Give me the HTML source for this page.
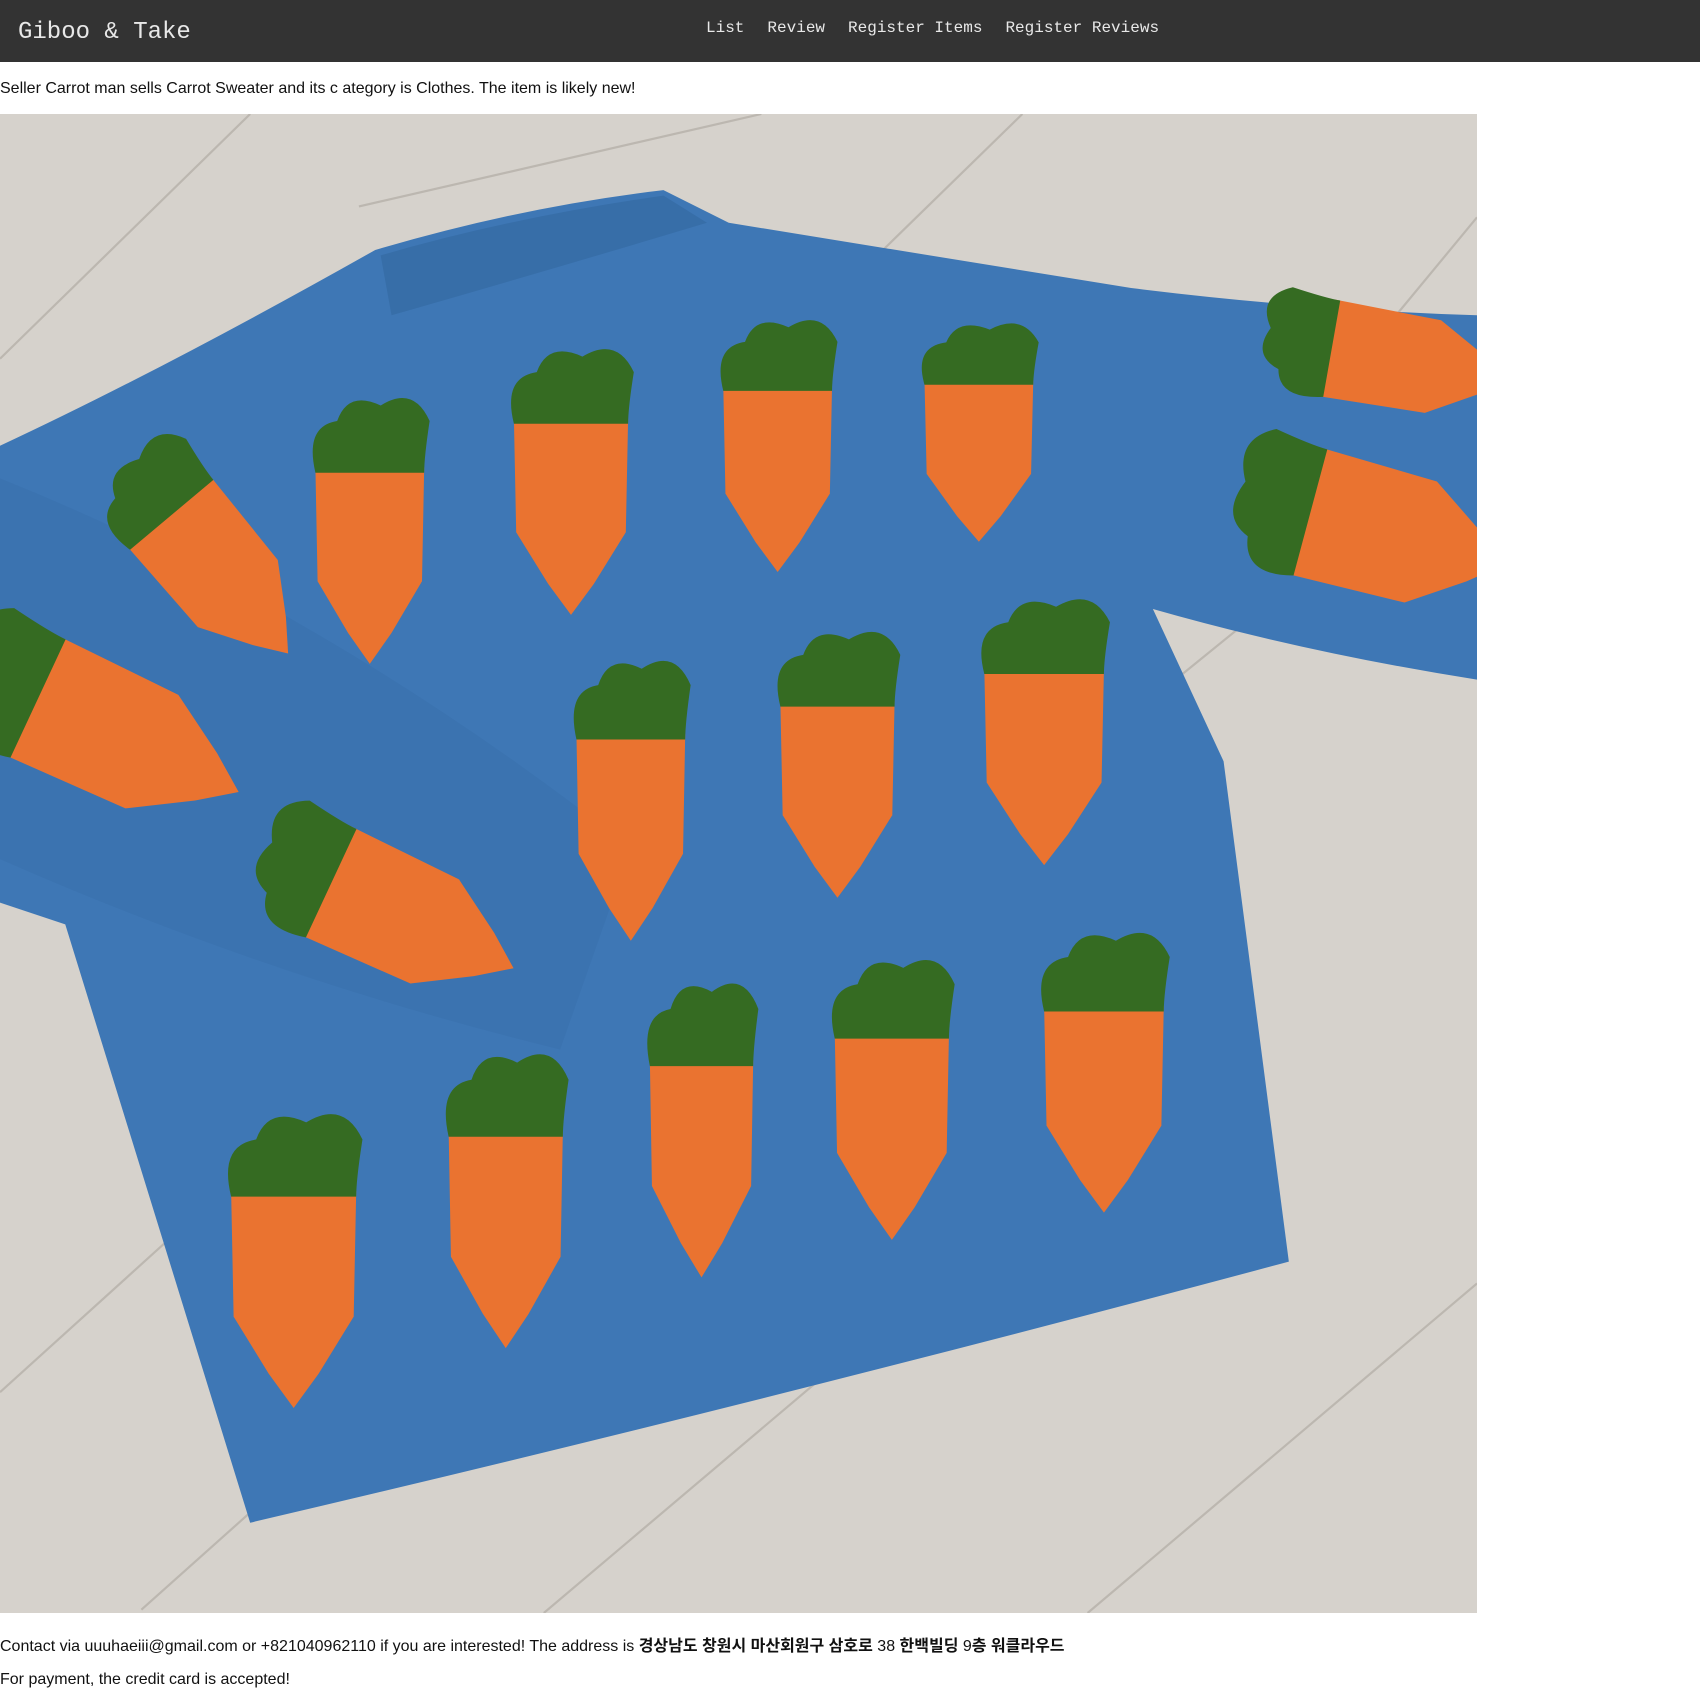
<!DOCTYPE html>
<html><head><meta charset="utf-8"><style>
body{margin:0;width:1700px;height:1705px;overflow:hidden;background:#fff;font-family:"Liberation Sans","Noto Sans CJK KR",sans-serif;font-size:16px;color:#111}
.hdr{position:absolute;left:0;top:0;width:1700px;height:62px;background:#333}
.title{position:absolute;left:18px;top:19px;font-family:"Liberation Mono",monospace;font-size:24px;color:#e8e8e8}
.nav{position:absolute;left:706px;top:19px;font-family:"Liberation Mono",monospace;font-size:16px;color:#e8e8e8;white-space:nowrap}
.nav span{margin-right:23px}
.t{position:absolute;left:0;white-space:nowrap}
svg{position:absolute;left:0;top:114px}
</style></head><body>
<div class="hdr"><div class="title">Giboo &amp; Take</div>
<div class="nav"><span>List</span><span>Review</span><span>Register Items</span><span>Register Reviews</span></div></div>
<div class="t" style="top:80px">Seller Carrot man sells Carrot Sweater and its c ategory is Clothes. The item is likely new!</div>
<svg width="1477" height="1499" viewBox="0 105 1358 1378" preserveAspectRatio="none">
<defs><g id="c"><path d="M-50,0 Q0,-8 50,0 L48,110 L20,160 L0,190 L-20,160 L-48,110 Z" fill="#ea7330"/><path d="M-50,5 Q-60,-40 -30,-45 Q-20,-75 10,-60 Q40,-80 55,-45 Q50,-10 50,5 Z" fill="#356b22"/></g></defs>
<rect x="0" y="105" width="1358" height="1378" fill="#d6d2cc"/>
<g stroke="#aaa59d" stroke-width="2" fill="none" opacity=".6">
<path d="M0,330 L230,105 M330,190 L700,105 M0,1280 L420,900 M130,1480 L600,1060 M500,1483 L1000,1060 M1000,1483 L1358,1180 M1050,650 L1358,400 M940,105 L740,300 M1358,200 L1110,500"/>
</g>
<path d="M345,230 Q480,190 610,175 L670,205 L1040,265 Q1200,285 1358,290 L1358,625 Q1200,600 1060,560 L1125,700 L1185,1160 Q700,1290 230,1400 L60,850 L0,830 L0,410 Q150,340 345,230 Z" fill="#3e77b5"/>
<path d="M0,440 Q300,560 580,780 L515,965 Q250,900 0,790 Z" fill="#3b73b0"/>
<path d="M350,235 Q470,200 610,180 L650,205 Q500,250 360,290 Z" fill="#376ea8"/>
<g>
<use href="#c" transform="translate(340,430) scale(1,0.95)"/>
<use href="#c" transform="translate(525,385) scale(1.05,0.95)"/>
<use href="#c" transform="translate(715,355) scale(1,0.9)"/>
<use href="#c" transform="translate(900,350) scale(1,0.78)"/>
<use href="#c" transform="translate(580,675) scale(1,1)"/>
<use href="#c" transform="translate(770,645) scale(1.05,0.95)"/>
<use href="#c" transform="translate(960,615) scale(1.1,0.95)"/>
<use href="#c" transform="translate(270,1095) scale(1.15,1.05)"/>
<use href="#c" transform="translate(465,1040) scale(1.05,1.05)"/>
<use href="#c" transform="translate(645,975) scale(0.95,1.05)"/>
<use href="#c" transform="translate(820,950) scale(1.05,1)"/>
<use href="#c" transform="translate(1015,925) scale(1.1,1)"/>
<use href="#c" transform="translate(300,810) rotate(-65) scale(1.1,1)"/>
<use href="#c" transform="translate(30,640) rotate(-65) scale(1.2,1.1)"/>
<use href="#c" transform="translate(155,470) rotate(-40) scale(1,0.9)"/>
<use href="#c" transform="translate(1200,470) rotate(-75) scale(1.2,1)"/>
<use href="#c" transform="translate(1220,320) rotate(-80) scale(0.9,0.9)"/>
</g>
</svg>
<div class="t" style="top:1632px">Contact via uuuhaeiii@gmail.com or +821040962110 if you are interested! The address is <b>경상남도 창원시 마산회원구 삼호로</b> 38 <b>한백빌딩</b> 9<b>층 워클라우드</b></div>
<div class="t" style="top:1671px">For payment, the credit card is accepted!</div>
</body></html>
